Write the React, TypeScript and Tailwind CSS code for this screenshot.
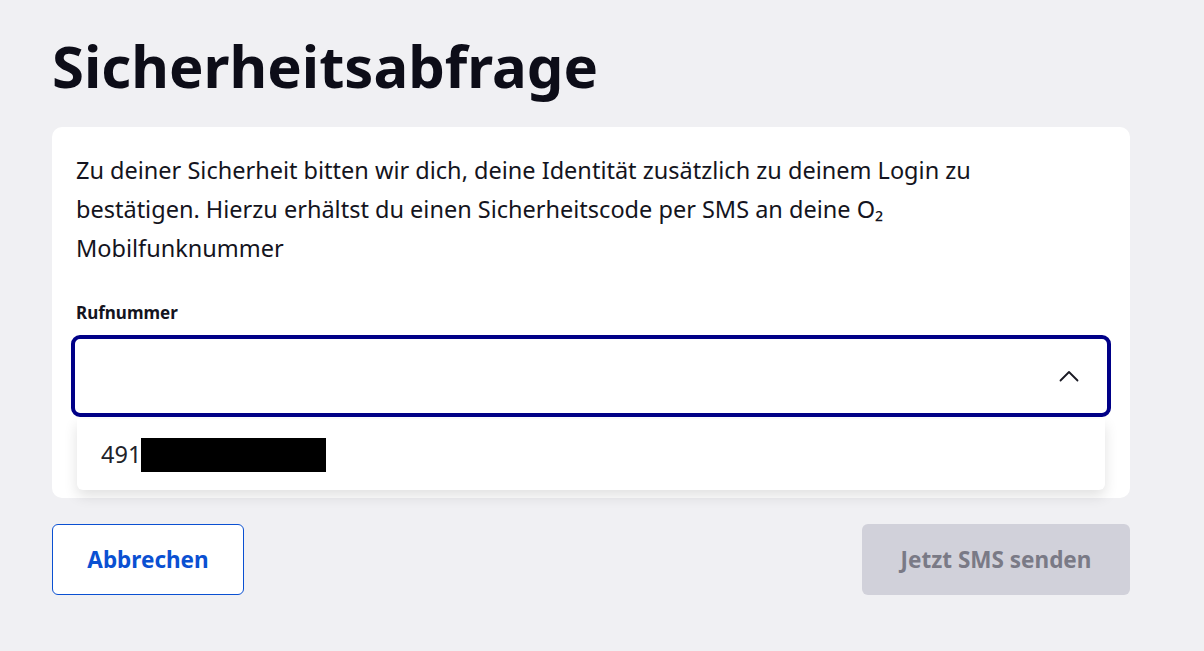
import React from 'react';

const ChevronUp = () => (
    <svg width="20" height="12" viewBox="0 0 20 12" fill="none" className="text-[#1a1a24]">
        <path d="M1.5 10.5 L10 2 L18.5 10.5" stroke="currentColor" strokeWidth="1.8" strokeLinecap="round" strokeLinejoin="round" />
    </svg>
);

export default function App() {
    return (
        <div className="min-h-[651px] w-full bg-[#f0f0f3] font-['Noto_Sans','Liberation_Sans',sans-serif] text-[#12121c]">
            <div className="ml-[52px] flex w-[1078px] flex-col pt-[30px]">
                <h1 className="text-[58px] font-bold leading-[72px] text-[#0d0d18]">
                    Sicherheitsabfrage
                </h1>

                <div className="mt-[25px] rounded-[10px] bg-white px-[24px] pt-[24px] pb-[81px]">
                    <p className="text-[23.5px] leading-[39px] text-[#141420]">
                        Zu deiner Sicherheit bitten wir dich, deine Identität zusätzlich zu deinem Login zu
                        <br />
                        bestätigen. Hierzu erhältst du einen Sicherheitscode per SMS an deine O₂
                        <br />
                        Mobilfunknummer
                    </p>

                    <label className="mt-[34px] block text-[17px] font-bold leading-[22px] text-[#141420]">
                        Rufnummer
                    </label>

                    <div className="relative -mx-[5px] mt-[11px]">
                        <div className="flex h-[82px] items-center justify-end rounded-[9px] border-[4px] border-[#000087] bg-white pr-[28px]">
                            <ChevronUp />
                        </div>
                        <div className="absolute left-[6px] right-[6px] top-full mt-[2px] flex h-[71px] items-center rounded-b-[6px] bg-white pl-[24px] shadow-[0_6px_14px_rgba(0,0,0,0.12)]">
                            <span className="text-[23.5px] leading-none text-[#222228]">491</span>
                            <span className="h-[34px] w-[185px] bg-black" />
                        </div>
                    </div>
                </div>

                <div className="mt-[26px] flex items-center justify-between">
                    <button className="flex h-[71px] w-[192px] items-center justify-center rounded-[6px] border border-[#0a50d2] bg-white text-[22.5px] font-bold text-[#0a50d2]">
                        Abbrechen
                    </button>
                    <button className="flex h-[71px] w-[268px] items-center justify-center rounded-[6px] bg-[#d1d1da] text-[22.5px] font-bold text-[#7a7a86]">
                        Jetzt SMS senden
                    </button>
                </div>
            </div>
        </div>
    );
}
